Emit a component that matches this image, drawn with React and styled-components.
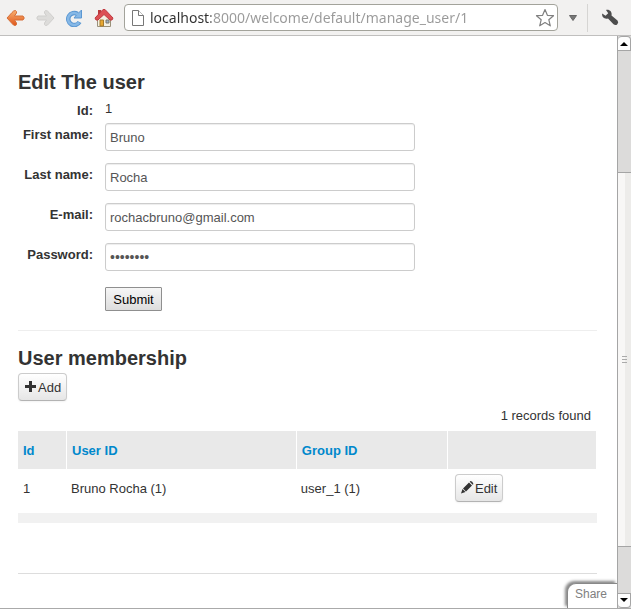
import React from "react";
import styled, { createGlobalStyle } from "styled-components";

const Global = createGlobalStyle`
  * { box-sizing: border-box; }
  body { margin: 0; background: #fff; }
  body, button, input { font-family: "Liberation Sans", Arial, sans-serif; font-size: 13px; }
`;

const Browser = styled.div`
  display: flex;
  flex-direction: column;
  min-height: 100vh;
  line-height: 18px;
  color: #333;
`;

const Toolbar = styled.header`
  display: flex;
  align-items: center;
  height: 36px;
  padding: 0 10px 0 6px;
  background: #f2f1f0;
  border-bottom: 1px solid #c0bfbe;
`;

const ToolButton = styled.button`
  display: flex;
  flex: none;
  align-items: center;
  justify-content: center;
  width: ${(p) => p.$width || 20}px;
  height: 24px;
  margin-right: ${(p) => p.$gap || 0}px;
  padding: 0;
  border: 0;
  background: none;
`;

const AddressBar = styled.div`
  display: flex;
  flex: 1;
  align-items: center;
  min-width: 0;
  height: 27px;
  padding: 0 2px 0 7px;
  gap: 6px;
  background: #fff;
  border: 1px solid #a3a39b;
  border-radius: 4px;
`;

const Address = styled.input`
  flex: 1;
  min-width: 0;
  height: 22px;
  padding: 0;
  border: 0;
  outline: 0;
  font-family: "Noto Sans", sans-serif;
  font-size: 14px;
  color: transparent;
  background: linear-gradient(to right, #303030 61px, #999 61px);
  background-clip: text;
`;

const Divider = styled.div`
  width: 1px;
  height: 28px;
  margin-right: 11px;
  background: #d6d5d3;
`;

const Viewport = styled.div`
  display: flex;
  flex: 1;
  position: relative;
  border-bottom: 1px solid #aaa;
`;

const Page = styled.main`
  flex: 1;
  min-width: 0;
  padding: 33px 20px 30px 18px;
`;

const Heading = styled.h3`
  margin: 0 0 1px;
  font-size: 20px;
  line-height: 27px;
`;

const Form = styled.form`
  display: grid;
  grid-template-columns: 75px minmax(0, 310px);
  column-gap: 12px;
  row-gap: 12px;
  padding-bottom: 19px;
  border-bottom: 1px solid #eee;
`;

const Label = styled.label`
  padding-top: 3px;
  font-weight: bold;
  text-align: right;
`;

const IdLabel = styled(Label)`
  padding-top: 5px;
  margin-bottom: -9px;
`;

const IdValue = styled.output`
  padding-top: 3px;
  margin-bottom: -7px;
`;

const TextBox = styled.input`
  width: 100%;
  height: 28px;
  padding: 4px;
  border: 1px solid #ccc;
  border-radius: 3px;
  color: #555;
  box-shadow: inset 0 1px 1px rgba(0, 0, 0, 0.075);
  &[type="password"] { font-size: 14px; }
`;

const Submit = styled.button`
  grid-column: 2;
  justify-self: start;
  width: 57px;
  height: 24px;
  margin-top: 4px;
  padding: 0;
  border: 1px solid #8f8f8f;
  border-radius: 1px;
  color: #000;
  background: linear-gradient(#f6f6f6, #ddd);
`;

const Membership = styled.section`
  padding: 14px 0 50px;
  border-bottom: 1px solid #ddd;
`;

const SmallButton = styled.button`
  display: inline-flex;
  align-items: center;
  gap: 1px;
  height: 28px;
  padding: 0 5px;
  border: 1px solid #ccc;
  border-bottom-color: #b3b3b3;
  border-radius: 4px;
  color: #333;
  background: linear-gradient(#fff, #e6e6e6);
  box-shadow: 0 1px 2px rgba(0, 0, 0, 0.05);
`;

const Count = styled.div`
  padding: 6px 6px 6px 0;
  text-align: right;
`;

const Grid = styled.table`
  width: 100%;
  table-layout: fixed;
  border-collapse: separate;
  border-spacing: 0;
  border-bottom: 10px solid #f1f1f1;
`;

const Column = styled.col`
  width: ${(p) => p.$width};
`;

const HeadCell = styled.th`
  height: 38px;
  padding: 2px 5px 0;
  border-right: 1px solid #fff;
  text-align: left;
  background: #e9e9e9;
`;

const SortLink = styled.a`
  color: #0088cc;
  text-decoration: none;
`;

const Cell = styled.td`
  height: 44px;
  padding: 0 4px 5px;
  &:first-child { padding-left: 5px; }
  &:last-child { padding: 0 7px 6px; }
`;

const ButtonLine = styled.div`
  display: flex;
`;

const Scrollbar = styled.aside`
  display: flex;
  flex: none;
  flex-direction: column;
  width: 14px;
  border-left: 1px solid #a5a5a5;
  background: #dcdbda;
`;

const Arrow = styled.button`
  display: flex;
  align-items: center;
  justify-content: center;
  height: 15px;
  padding: 0;
  border: 1px solid #a5a5a5;
  border-left: 0;
  border-radius: ${(p) => (p.$down ? "0 0 4px 4px" : "4px 4px 0 0")};
  background: #fdfdfd;
`;

const Trough = styled.div`
  flex: ${(p) => p.$share};
`;

const Thumb = styled.div`
  display: flex;
  flex: 375;
  flex-direction: column;
  align-items: center;
  justify-content: center;
  gap: 2px;
  border: solid #a5a5a5;
  border-width: 1px 0;
  background: linear-gradient(to right, #f8f7f6 7px, #edecea 7px);
`;

const Grip = styled.i`
  width: 5px;
  height: 1px;
  background: #aaa;
`;

const Share = styled.button`
  position: absolute;
  right: 14px;
  bottom: 0;
  width: 50px;
  height: 25px;
  padding: 0 3px 4px 0;
  border: 1px solid #888;
  border-width: 1px 0 0 1px;
  border-radius: 9px 0 0 0;
  font-size: 12px;
  color: #808080;
  background: #fff;
  box-shadow: -2px -2px 3px #888;
  clip-path: inset(-6px 0 0 -6px);
`;

const backArrow = "M9.500 1.500Q11 2.500 10.500 4L8.500 7H17q2.500 2 0 4H8.500l2 3q.5 2-1 2.500-2 .3-3.500-2L1 9l5-5.500Q7.500 1.500 9.500 1.500Z";

const BackIcon = () => (
  <svg width="20" height="18" viewBox="0 0 20 18">
    <defs>
      <linearGradient id="orange" x2="0" y2="1">
        <stop stopColor="#f9b070" />
        <stop offset="1" stopColor="#e0561a" />
      </linearGradient>
    </defs>
    <path d={backArrow} fill="url(#orange)" stroke="#d5703a" />
  </svg>
);

const ForwardIcon = () => (
  <svg width="20" height="18" viewBox="0 0 20 18">
    <path d={backArrow} transform="matrix(-1 0 0 1 20 0)" fill="#dddcda" stroke="#d0cfcd" />
  </svg>
);

const ReloadIcon = () => (
  <svg width="18" height="18" viewBox="0 0 18 18" fill="none">
    <path d="M14.500 13A6 6 0 1 1 12.500 5" stroke="#5b97d2" strokeWidth="4.500" />
    <path d="M16.500 1v8H9l2.500-3 2-2Z" fill="#86b8e6" stroke="#5b97d2" strokeLinejoin="round" />
    <path d="M14 13.500A6 6 0 1 1 13 5.500" stroke="#86b8e6" strokeWidth="2.500" />
  </svg>
);

const HomeIcon = () => (
  <svg width="20" height="20" viewBox="0 0 20 20">
    <path d="M4 2h3v5H4Z" fill="#b9393c" />
    <path d="M3.500 10 10 4.500 16.500 10v8.500h-13Z" fill="#f4f0e2" stroke="#9a917a" />
    <path d="M6 12h3.500v6H6Z" fill="#e8a830" stroke="#a57a2c" />
    <path d="M12 12h3v3h-3Z" fill="#9cb4cc" stroke="#7d7768" />
    <path d="m1 10 8-8.500h2L19 10l-1 2h-2l-6-5.500L4 12H2Z" fill="#dc5054" stroke="#c03a40" strokeLinejoin="round" />
  </svg>
);

const PageIcon = () => (
  <svg width="12" height="16" viewBox="0 0 12 16" fill="#fff" stroke="#777">
    <path d="M.5.5h6l5 5v10H.5Z" />
    <path d="M6.500.5v5h5" />
  </svg>
);

const StarIcon = () => (
  <svg width="20" height="20" viewBox="0 0 20 20" fill="#fff" stroke="#808080" strokeWidth="1.200" strokeLinejoin="round">
    <path d="m10 1.500 2.400 5.800 6.100.4-4.700 4 1.500 6.100-5.300-3.300-5.300 3.300 1.500-6.100-4.700-4 6.100-.4Z" />
  </svg>
);

const MenuIcon = () => (
  <svg width="8" height="6" viewBox="0 0 8 6">
    <path d="M.5.5h7L4 5.500Z" fill="#777" stroke="#666" strokeLinejoin="round" />
  </svg>
);

const WrenchIcon = () => (
  <svg width="18" height="18" viewBox="0 0 18 18">
    <path d="M5 1C8 0 11.500 2.500 10.500 6.500l6 5q1.500 2-.2 3.700t-3.800.1L7 9.500C3.500 10.500.5 8 1.200 4.500l3.300 2.300 2.700-2.500Z" fill="#4d4d4d" />
  </svg>
);

const PlusIcon = () => (
  <svg width="13" height="12" viewBox="0 0 13 12">
    <path d="M5 0h3v4h4v3H8v4H5V7H1V4h4Z" fill="#333" />
  </svg>
);

const PencilIcon = () => (
  <svg width="13" height="14" viewBox="0 0 13 14" fill="#333">
    <path d="m0 12.500 1.500-4.500 3 3ZM2 7.500 8 1.500l3 3-6 6ZM8.700.8 9.500 0q2 0 3 3l-.8.800Z" />
  </svg>
);

const Triangle = ({ down }) => (
  <svg width="8" height="4" viewBox="0 0 8 4">
    <path d={down ? "M0 0h8L4 4Z" : "M0 4h8L4 0Z"} />
  </svg>
);

const fields = [
  { id: "first", label: "First name:", value: "Bruno", type: "text" },
  { id: "last", label: "Last name:", value: "Rocha", type: "text" },
  { id: "email", label: "E-mail:", value: "rochacbruno@gmail.com", type: "email" },
  { id: "password", label: "Password:", value: "12345678", type: "password" },
];

export default function App() {
  return (
    <Browser>
      <Global />
      <Toolbar>
        <ToolButton aria-label="Back" $gap={9}><BackIcon /></ToolButton>
        <ToolButton aria-label="Forward" $gap={9}><ForwardIcon /></ToolButton>
        <ToolButton aria-label="Reload" $gap={10}><ReloadIcon /></ToolButton>
        <ToolButton aria-label="Home" $gap={10}><HomeIcon /></ToolButton>
        <AddressBar>
          <PageIcon />
          <Address aria-label="Address" defaultValue="localhost:8000/welcome/default/manage_user/1" />
          <ToolButton aria-label="Bookmark"><StarIcon /></ToolButton>
        </AddressBar>
        <ToolButton aria-label="Show menu" $width={29}><MenuIcon /></ToolButton>
        <Divider />
        <ToolButton aria-label="Settings" $width={22}><WrenchIcon /></ToolButton>
      </Toolbar>
      <Viewport>
        <Page>
          <Heading>Edit The user</Heading>
          <Form onSubmit={(e) => e.preventDefault()}>
            <IdLabel htmlFor="user-id">Id:</IdLabel>
            <IdValue id="user-id">1</IdValue>
            {fields.map((f) => (
              <React.Fragment key={f.id}>
                <Label htmlFor={f.id}>{f.label}</Label>
                <TextBox id={f.id} type={f.type} defaultValue={f.value} />
              </React.Fragment>
            ))}
            <Submit type="submit">Submit</Submit>
          </Form>
          <Membership>
            <Heading>User membership</Heading>
            <ButtonLine><SmallButton><PlusIcon />Add</SmallButton></ButtonLine>
            <Count>1 records found</Count>
            <Grid>
              <colgroup>
                <Column $width="49px" />
                <Column $width="39.7%" />
                <Column $width="26.1%" />
                <Column />
              </colgroup>
              <thead>
                <tr>
                  <HeadCell><SortLink href="#id">Id</SortLink></HeadCell>
                  <HeadCell><SortLink href="#user">User ID</SortLink></HeadCell>
                  <HeadCell><SortLink href="#group">Group ID</SortLink></HeadCell>
                  <HeadCell />
                </tr>
              </thead>
              <tbody>
                <tr>
                  <Cell>1</Cell>
                  <Cell>Bruno Rocha (1)</Cell>
                  <Cell>user_1 (1)</Cell>
                  <Cell><ButtonLine><SmallButton><PencilIcon />Edit</SmallButton></ButtonLine></Cell>
                </tr>
              </tbody>
            </Grid>
          </Membership>
        </Page>
        <Scrollbar>
          <Arrow aria-label="Scroll up"><Triangle /></Arrow>
          <Trough $share={121} />
          <Thumb><Grip /><Grip /><Grip /></Thumb>
          <Trough $share={46} />
          <Arrow aria-label="Scroll down" $down><Triangle down /></Arrow>
        </Scrollbar>
        <Share>Share</Share>
      </Viewport>
    </Browser>
  );
}
